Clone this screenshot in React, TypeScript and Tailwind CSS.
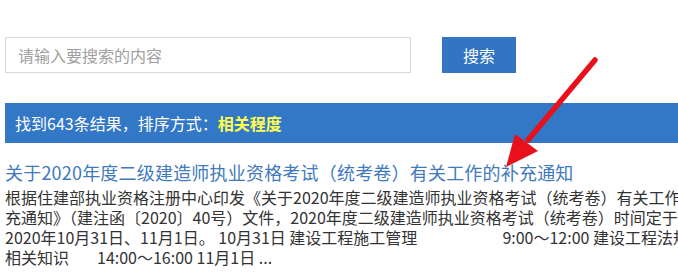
import React from 'react'

const font = { fontFamily: '"Noto Sans CJK SC", "Noto Sans", sans-serif' }

export default function App() {
  return (
    <div className="relative w-[678px] h-[279px] overflow-hidden bg-white" style={font}>
      <div className="w-[760px] pl-[5px] pt-[37px]">
        {/* search row */}
        <div className="flex items-center">
          <input
            className="w-[406px] h-[36px] border border-[#d9d9d9] px-[12px] text-[16px] text-[#333] outline-none placeholder:text-[#a0a0a0]"
            placeholder="请输入要搜索的内容"
          />
          <button className="ml-[31px] w-[74px] h-[36px] bg-[#3276c3] text-white text-[16px]">搜索</button>
        </div>

        {/* result bar */}
        <div className="mt-[30px] h-[40px] bg-[#3378c6] flex items-center pl-[10px] text-[16px] text-white">
          找到643条结果，排序方式：<span className="font-bold text-[#ffff4d]">相关程度</span>
        </div>

        {/* result item */}
        <div className="mt-[17px] text-[18px] leading-[24px] text-[#4079bd] tracking-[0.2px] whitespace-nowrap">
          关于2020年度二级建造师执业资格考试（统考卷）有关工作的补充通知
        </div>
        <div className="mt-[3px] text-[16px] leading-[20px] text-[#333] whitespace-nowrap">
          <div>根据住建部执业资格注册中心印发《关于2020年度二级建造师执业资格考试（统考卷）有关工作的补</div>
          <div>充通知》（建注函〔2020〕40号）文件，2020年度二级建造师执业资格考试（统考卷）时间定于</div>
          <div>
            2020年10月31日、11月1日。 10月31日 建设工程施工管理
            <span className="inline-block w-[85px]"></span>
            9:00～12:00 建设工程法规及
          </div>
          <div>
            相关知识<span className="inline-block w-[28px]"></span>14:00～16:00 11月1日 ...
          </div>
        </div>
      </div>

      {/* red arrow */}
      <svg className="absolute left-0 top-0" width="678" height="279" viewBox="0 0 678 279">
        <line x1="595" y1="60" x2="528" y2="140" stroke="#e8101a" strokeWidth="5.5" strokeLinecap="round" />
        <polygon points="506,167 515,134 538,151" fill="#e8101a" />
      </svg>
    </div>
  )
}
